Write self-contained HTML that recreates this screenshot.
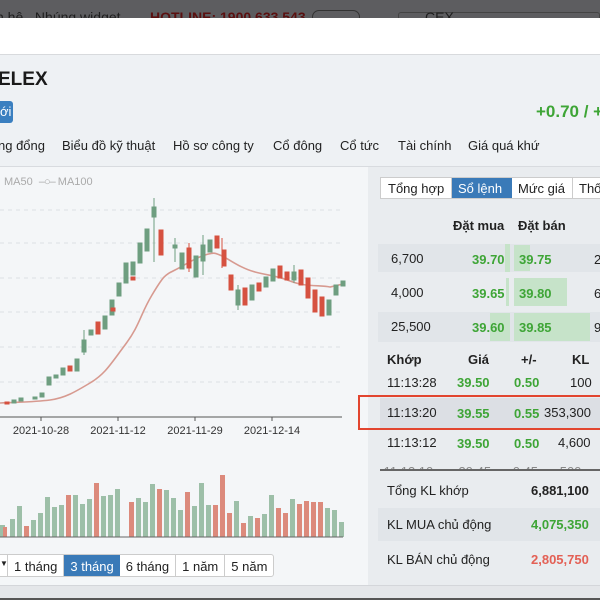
<!DOCTYPE html>
<html><head><meta charset="utf-8"><style>
*{margin:0;padding:0;box-sizing:border-box}
body{width:600px;height:600px;overflow:hidden;background:#eef1f4;font-family:"Liberation Sans","Noto Sans CJK SC",sans-serif;position:relative;color:#222}
.a{position:absolute;white-space:nowrap}
.g{color:#3ea536;font-weight:bold}
.r{color:#e0473a;font-weight:bold}
.t{position:absolute;top:138px;font-size:13px;color:#222}
</style></head><body>
<div class="a" style="left:0;top:0;width:600px;height:18px;background:#5d5d60;overflow:hidden">
 <div class="a" style="top:9px;left:-4px;font-size:14px;color:#1e1e1e">n hệ &nbsp;&nbsp;Nhúng widget</div>
 <div class="a" style="top:9px;left:150px;font-size:14px;color:#5a1010;font-weight:bold">HOTLINE: 1900 633 543</div>
 <div class="a" style="top:10px;left:312px;width:48px;height:14px;border:1px solid #333;border-radius:7px"></div>
 <div class="a" style="top:12px;left:398px;width:202px;height:16px;border:1px solid #444;border-radius:3px"></div>
 <div class="a" style="top:9px;left:425px;font-size:14px;color:#1e1e1e">CEX</div>
</div>
<div class="a" style="left:0;top:18px;width:600px;height:37px;background:#fff;border-bottom:1px solid #d8dadd"></div>
<div class="a" style="left:-2px;top:69px;font-size:19px;font-weight:bold;color:#1a1a1a">ELEX</div>
<div class="a" style="left:-4px;top:101px;width:17px;height:22px;background:#3a7fc0;border-radius:3px;color:#fff;font-size:13px;padding:3px 0 0 4px">ới</div>
<div class="a g" style="left:536px;top:102px;font-size:17px">+0.70 / +</div>
<div class="t" style="left:-2px">ng đổng</div>
<div class="t" style="left:62px">Biểu đồ kỹ thuật</div>
<div class="t" style="left:173px">Hồ sơ công ty</div>
<div class="t" style="left:273px">Cổ đông</div>
<div class="t" style="left:340px">Cổ tức</div>
<div class="t" style="left:398px">Tài chính</div>
<div class="t" style="left:468px">Giá quá khứ</div>
<div class="a" style="left:0;top:166px;width:600px;height:1px;background:#d8dbdf"></div>
<div class="a" style="left:0;top:167px;width:368px;height:418px;background:#f4f6f8"></div>
<div class="a" style="left:4px;top:176px;font-size:11px;color:#aaa">MA50 &nbsp;<span style="letter-spacing:-1px">–○–</span> MA100</div>
<svg class="a" style="left:0;top:190px" width="368" height="360" viewBox="0 190 368 360">
<g stroke="#dde0e4" stroke-dasharray="4,4">
<line x1="0" y1="210" x2="343" y2="210"/><line x1="0" y1="243" x2="343" y2="243"/><line x1="0" y1="278" x2="343" y2="278"/><line x1="0" y1="312" x2="343" y2="312"/><line x1="0" y1="347" x2="343" y2="347"/><line x1="0" y1="382" x2="343" y2="382"/>
</g>
<line x1="0" y1="417" x2="342" y2="417" stroke="#555"/>
<g stroke="#555"><line x1="41" y1="417" x2="41" y2="421"/><line x1="118" y1="417" x2="118" y2="421"/><line x1="195" y1="417" x2="195" y2="421"/><line x1="272" y1="417" x2="272" y2="421"/></g>
<g font-size="11" fill="#333" text-anchor="middle" font-family="Liberation Sans"><text x="41" y="434">2021-10-28</text><text x="118" y="434">2021-11-12</text><text x="195" y="434">2021-11-29</text><text x="272" y="434">2021-12-14</text></g>
<path d="M0,403 C20,402 35,402 50,400 S75,392 90,383 S110,365 125,345 S140,315 152,295 S165,275 175,270 S195,258 205,255 S215,253 222,256 S240,268 255,272 S275,275 290,281 S320,285 330,287 L343,284" fill="none" stroke="#d79a90" stroke-width="1.6"/>
<g stroke-width="1">
<g fill="#6e9e80" stroke="#6e9e80">
<rect x="12" y="400" width="4" height="3"/><rect x="19" y="398" width="4" height="3"/><rect x="33" y="397" width="4" height="2"/><rect x="40" y="393" width="4" height="4"/>
<rect x="47" y="377" width="4" height="8"/><rect x="54" y="375" width="4" height="3"/><rect x="61" y="368" width="4" height="7"/><rect x="75" y="359" width="4" height="12"/>
<rect x="82" y="340" width="4" height="12"/><rect x="89" y="330" width="4" height="5"/><rect x="103" y="316" width="4" height="13"/><rect x="110" y="300" width="4" height="15"/>
<rect x="117" y="283" width="4" height="13"/><rect x="124" y="263" width="4" height="20"/><rect x="131" y="262" width="4" height="13"/><rect x="138" y="243" width="4" height="20"/>
<rect x="145" y="229" width="4" height="22"/><rect x="152" y="207" width="4" height="10"/><rect x="173" y="245" width="4" height="3"/><rect x="180" y="253" width="4" height="16"/>
<rect x="194" y="256" width="4" height="21"/><rect x="201" y="245" width="4" height="16"/><rect x="208" y="240" width="4" height="12"/><rect x="236" y="290" width="4" height="15"/>
<rect x="250" y="285" width="4" height="15"/><rect x="264" y="277" width="4" height="10"/><rect x="271" y="269" width="4" height="12"/><rect x="292" y="272" width="4" height="8"/>
<rect x="334" y="285" width="4" height="10"/><rect x="327" y="300" width="4" height="15"/><rect x="341" y="281" width="4" height="5"/>
</g>
<g stroke="#6e9e80"><line x1="154" y1="198" x2="154" y2="262"/><line x1="175" y1="238" x2="175" y2="262"/><line x1="238" y1="285" x2="238" y2="310"/><line x1="203" y1="235" x2="203" y2="275"/><line x1="294" y1="265" x2="294" y2="283"/><line x1="84" y1="330" x2="84" y2="355"/></g>
<g fill="#d65140" stroke="#d65140">
<rect x="5" y="402" width="4" height="2"/><rect x="68" y="366" width="4" height="5"/><rect x="96" y="322" width="4" height="12"/><rect x="111" y="308" width="4" height="3"/>
<rect x="131" y="277" width="4" height="3"/><rect x="159" y="230" width="4" height="25"/><rect x="187" y="248" width="4" height="20"/><rect x="215" y="236" width="4" height="12"/>
<rect x="222" y="250" width="4" height="16"/><rect x="229" y="275" width="4" height="15"/><rect x="243" y="288" width="4" height="17"/><rect x="257" y="283" width="4" height="8"/>
<rect x="278" y="266" width="4" height="12"/><rect x="285" y="272" width="4" height="8"/><rect x="299" y="270" width="4" height="15"/><rect x="306" y="278" width="4" height="20"/>
<rect x="313" y="290" width="4" height="22"/><rect x="320" y="297" width="4" height="19"/>
</g>
<g stroke="#d65140"><line x1="189" y1="243" x2="189" y2="272"/><line x1="222" y1="238" x2="222" y2="268"/></g>
</g>
<g>
<g fill="#9dbfa8">
<rect x="0" y="525" width="5" height="12"/><rect x="10" y="519" width="5" height="18"/><rect x="17" y="506" width="5" height="31"/><rect x="31" y="520" width="5" height="17"/><rect x="38" y="513" width="5" height="24"/><rect x="45" y="497" width="5" height="40"/><rect x="52" y="507" width="5" height="30"/><rect x="59" y="505" width="5" height="32"/><rect x="73" y="495" width="5" height="42"/><rect x="80" y="504" width="5" height="33"/><rect x="87" y="499" width="5" height="38"/><rect x="101" y="496" width="5" height="41"/><rect x="108" y="495" width="5" height="42"/><rect x="115" y="489" width="5" height="48"/><rect x="136" y="498" width="5" height="39"/><rect x="143" y="502" width="5" height="35"/><rect x="150" y="484" width="5" height="53"/><rect x="164" y="490" width="5" height="47"/><rect x="171" y="498" width="5" height="39"/><rect x="178" y="510" width="5" height="27"/><rect x="192" y="506" width="5" height="31"/><rect x="199" y="483" width="5" height="54"/><rect x="206" y="505" width="5" height="32"/><rect x="234" y="501" width="5" height="36"/><rect x="248" y="516" width="5" height="21"/><rect x="262" y="514" width="5" height="23"/><rect x="269" y="495" width="5" height="42"/><rect x="290" y="499" width="5" height="38"/><rect x="325" y="508" width="5" height="29"/><rect x="332" y="510" width="5" height="27"/><rect x="339" y="522" width="5" height="15"/>
</g>
<g fill="#dc8a7c">
<rect x="3" y="527" width="4" height="10"/><rect x="24" y="526" width="5" height="11"/><rect x="66" y="495" width="5" height="42"/><rect x="94" y="483" width="5" height="54"/><rect x="129" y="502" width="5" height="35"/><rect x="157" y="489" width="5" height="48"/><rect x="185" y="492" width="5" height="45"/><rect x="213" y="505" width="5" height="32"/><rect x="220" y="475" width="5" height="62"/><rect x="227" y="513" width="5" height="24"/><rect x="241" y="523" width="5" height="14"/><rect x="255" y="518" width="5" height="19"/><rect x="276" y="508" width="5" height="29"/><rect x="283" y="513" width="5" height="24"/><rect x="297" y="504" width="5" height="33"/><rect x="304" y="501" width="5" height="36"/><rect x="311" y="502" width="5" height="35"/><rect x="318" y="502" width="5" height="35"/>
</g>
<line x1="0" y1="537" x2="343" y2="537" stroke="#666"/>
</g>
</svg>
<div class="a" style="left:-4px;top:554px;height:23px;display:flex;font-size:13px;border:1px solid #ccc;border-radius:3px;background:#fff;overflow:hidden">
 <div style="width:11px;border-right:1px solid #ccc;padding:4px 0 0 3px;font-size:8px">▼</div>
 <div style="padding:4px 6px;border-right:1px solid #ccc">1 tháng</div>
 <div style="padding:4px 6px;background:#3a7ab8;color:#fff">3 tháng</div>
 <div style="padding:4px 6px;border-right:1px solid #ccc">6 tháng</div>
 <div style="padding:4px 6px;border-right:1px solid #ccc">1 năm</div>
 <div style="padding:4px 6px">5 năm</div>
</div>
<div class="a" style="left:368px;top:167px;width:232px;height:418px;background:#e9ecef"></div>
<div class="a" style="left:380px;top:177px;height:22px;display:flex;font-size:13px;background:#fff;border:1px solid #ccc;width:240px">
 <div style="width:71px;padding:3px 0 0 7px;border-right:1px solid #ccc">Tổng hợp</div>
 <div style="width:60px;padding:3px 0 0 6px;background:#3a7ab8;color:#fff">Sổ lệnh</div>
 <div style="width:61px;padding:3px 0 0 6px;border-right:1px solid #ccc">Mức giá</div>
 <div style="padding:3px 0 0 6px">Thố</div>
</div>
<div class="a" style="left:453px;top:218px;font-size:13px;font-weight:bold">Đặt mua</div>
<div class="a" style="left:518px;top:218px;font-size:13px;font-weight:bold">Đặt bán</div>
<div class="a" style="left:378px;top:244px;width:222px;height:28px;background:#e1e5e9"></div>
<div class="a" style="left:378px;top:312px;width:222px;height:30px;background:#e1e5e9"></div>
<div class="a" style="left:505px;top:244px;width:5px;height:28px;background:#c6e3c9"></div>
<div class="a" style="left:514px;top:245px;width:16px;height:26px;background:#c6e3c9"></div>
<div class="a" style="left:506px;top:278px;width:3px;height:28px;background:#c6e3c9"></div>
<div class="a" style="left:514px;top:278px;width:53px;height:28px;background:#c6e3c9"></div>
<div class="a" style="left:490px;top:313px;width:20px;height:28px;background:#c6e3c9"></div>
<div class="a" style="left:514px;top:313px;width:76px;height:28px;background:#c6e3c9"></div>
<div class="a" style="left:391px;top:251px;font-size:13px">6,700</div>
<div class="a" style="left:391px;top:285px;font-size:13px">4,000</div>
<div class="a" style="left:391px;top:319px;font-size:13px">25,500</div>
<div class="a g" style="left:472px;top:252px;font-size:13px">39.70</div>
<div class="a g" style="left:472px;top:286px;font-size:13px">39.65</div>
<div class="a g" style="left:472px;top:320px;font-size:13px">39.60</div>
<div class="a g" style="left:519px;top:252px;font-size:13px">39.75</div>
<div class="a g" style="left:519px;top:286px;font-size:13px">39.80</div>
<div class="a g" style="left:519px;top:320px;font-size:13px">39.85</div>
<div class="a" style="left:594px;top:252px;font-size:13px">2</div>
<div class="a" style="left:594px;top:286px;font-size:13px">6</div>
<div class="a" style="left:594px;top:320px;font-size:13px">9</div>
<div class="a" style="left:387px;top:352px;font-size:13px;font-weight:bold">Khớp</div>
<div class="a" style="left:468px;top:352px;font-size:13px;font-weight:bold">Giá</div>
<div class="a" style="left:521px;top:352px;font-size:13px;font-weight:bold">+/-</div>
<div class="a" style="left:572px;top:352px;font-size:13px;font-weight:bold">KL</div>
<div class="a" style="left:380px;top:398px;width:220px;height:30px;background:#dcdfe4"></div>
<div class="a" style="left:358px;top:395px;width:244px;height:35px;border:2px solid #e2452f"></div>
<div class="a" style="left:387px;top:375px;font-size:13px">11:13:28</div>
<div class="a g" style="left:457px;top:375px;font-size:13px">39.50</div>
<div class="a g" style="left:514px;top:375px;font-size:13px">0.50</div>
<div class="a" style="left:570px;top:375px;font-size:13px">100</div>
<div class="a" style="left:387px;top:405px;font-size:13px">11:13:20</div>
<div class="a g" style="left:457px;top:406px;font-size:13px">39.55</div>
<div class="a g" style="left:514px;top:406px;font-size:13px">0.55</div>
<div class="a" style="left:544px;top:405px;font-size:13px">353,300</div>
<div class="a" style="left:387px;top:435px;font-size:13px">11:13:12</div>
<div class="a g" style="left:457px;top:436px;font-size:13px">39.50</div>
<div class="a g" style="left:514px;top:436px;font-size:13px">0.50</div>
<div class="a" style="left:558px;top:435px;font-size:13px">4,600</div>
<div class="a" style="left:380px;top:464px;width:220px;height:5px;overflow:hidden"><div style="font-size:13px;color:#888;margin-top:0">&nbsp;11:13:10 &nbsp;&nbsp;&nbsp;&nbsp;&nbsp;&nbsp;39.45 &nbsp;&nbsp;&nbsp;&nbsp;&nbsp;0.45 &nbsp;&nbsp;&nbsp;&nbsp;&nbsp;500</div></div>
<div class="a" style="left:380px;top:469px;width:220px;height:2px;background:#666"></div>
<div class="a" style="left:378px;top:508px;width:222px;height:33px;background:#e1e5e9"></div>
<div class="a" style="left:387px;top:483px;font-size:13px">Tổng KL khớp</div>
<div class="a" style="left:531px;top:483px;font-size:13px;font-weight:bold">6,881,100</div>
<div class="a" style="left:387px;top:517px;font-size:13px">KL MUA chủ động</div>
<div class="a g" style="left:531px;top:517px;font-size:13px">4,075,350</div>
<div class="a" style="left:387px;top:552px;font-size:13px">KL BÁN chủ động</div>
<div class="a r" style="left:531px;top:552px;font-size:13px;color:#e36055">2,805,750</div>
<div class="a" style="left:0;top:585px;width:600px;height:13px;background:#e4e6e9;border-top:1px solid #d4d6da"></div>
<div class="a" style="left:0;top:598px;width:600px;height:2px;background:#555"></div>
</body></html>
